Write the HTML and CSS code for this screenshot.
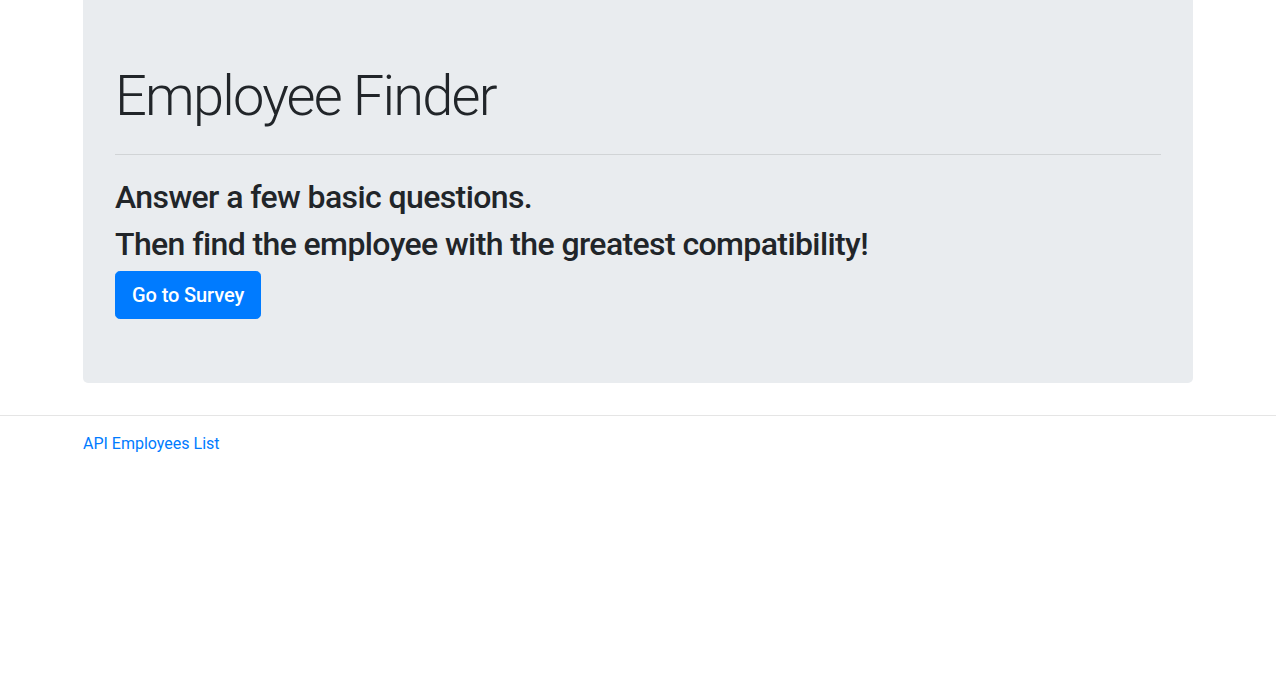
FILE: index.html
```html
<!DOCTYPE html>
<html lang="en">
<head>
<meta charset="utf-8">
<title>Employee Finder</title>
<link rel="stylesheet" href="styles.css">
</head>
<body>
<div class="container">
  <div class="jumbotron">
    <h1 class="display">Employee Finder</h1>
    <hr class="divider">
    <h2 class="lead-line">Answer a few basic questions.</h2>
    <h2 class="lead-line">Then find the employee with the greatest compatibility!</h2>
    <a class="btn-survey" href="#">Go to Survey</a>
  </div>
</div>
<footer class="footer">
  <div class="container">
    <a class="footer-link" href="#">API Employees List</a>
  </div>
</footer>
</body>
</html>
```
FILE: styles.css
```css
html, body {
  margin: 0;
  padding: 0;
  background: #fff;
}
body {
  font-family: Roboto, "Noto Sans", "Liberation Sans", sans-serif;
  font-size: 16px;
  line-height: 1.5;
  color: #212529;
}
.container {
  width: 1110px;
  margin: 0 auto;
}
.jumbotron {
  background: #e9ecef;
  padding: 63px 32px 64px;
  border-radius: 0 0 5px 5px;
  margin-bottom: 32px;
}
.display {
  margin: 0 0 8px;
  font-size: 56px;
  font-weight: 300;
  line-height: 1.2;
  letter-spacing: -1.8px;
}
.divider {
  margin: 24px 0 23px;
  border: 0;
  border-top: 1px solid rgba(0,0,0,0.1);
}
.lead-line {
  margin: 0 0 8px;
  font-size: 32px;
  font-weight: 500;
  line-height: 1.2;
  letter-spacing: -0.6px;
}
.btn-survey {
  display: inline-block;
  padding: 8px 16px;
  font-size: 20px;
  line-height: 30px;
  font-weight: 500;
  color: #fff;
  background: #007bff;
  border: 1px solid #007bff;
  border-radius: 4.8px;
  text-decoration: none;
  letter-spacing: -0.1px;
}
.footer {
  border-top: 1px solid #e5e5e5;
  padding-top: 16px;
}
.footer-link {
  color: #007bff;
  text-decoration: none;
  font-size: 16px;
}
```
